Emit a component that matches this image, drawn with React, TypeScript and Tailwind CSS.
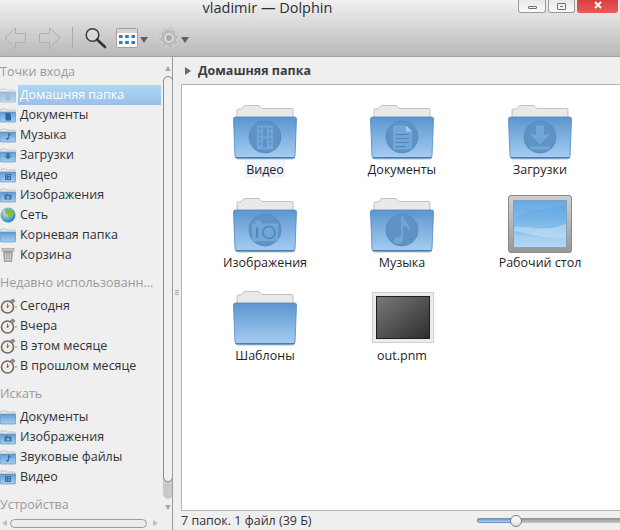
import React from 'react'

type Emblem = 'video' | 'doc' | 'down' | 'photo' | 'music' | 'home' | 'none'

const folderFront = 'M0.500 15 Q0.500 13 2.500 13 H61.500 Q63.500 13 63.500 15 L62 52 Q61.500 54 59.500 54 H4.500 Q2.500 54 2 52 Z'

function EmblemShape({ kind }: { kind: Emblem }) {
  const c = '#70a6d8'
  const d = '#4f85b9'
  if (kind === 'video') {
    return (
      <path d="M24 21 H40 V45 H24 Z M26 23 V26 H28 V23 Z M26 28 V31 H28 V28 Z M26 33 V36 H28 V33 Z M26 38 V41 H28 V38 Z M36 23 V26 H38 V23 Z M36 28 V31 H38 V28 Z M36 33 V36 H38 V33 Z M36 38 V41 H38 V38 Z M30 23 V32 H34 V23 Z M30 34 V43 H34 V34 Z" fill={c} fillRule="evenodd" />
    )
  }
  if (kind === 'doc') {
    return (
      <g>
        <path d="M23 21 H36 L42 27 V45 H23 Z" fill={c} />
        <path d="M36 21 V27 H42 Z" fill="#a6cdf0" />
        <path d="M26 30 H39 M26 34 H39 M26 38 H39 M26 42 H36" stroke={d} strokeWidth="1" />
      </g>
    )
  }
  if (kind === 'down') {
    return (
      <g fill={c}>
        <path d="M28 21 H36 V30 H42 L32 40 L22 30 H28 Z" />
        <path d="M22 42 H42 V45 H22 Z" />
      </g>
    )
  }
  if (kind === 'photo') {
    return (
      <g>
        <path d="M19 26 H22 V23 H28 V26 H45 V44 H19 Z" fill={c} />
        <rect x="23" y="30" width="2" height="10" fill={d} />
        <circle cx="36" cy="35" r="6" fill="none" stroke={d} strokeWidth="1.600" />
      </g>
    )
  }
  if (kind === 'music') {
    return (
      <path d="M31 19 H33 C34 25 41 26 40 34 C39 30 36 29 33 28 V41 C33 45 29 47 26 46 C23 45 23 42 26 40 C28 39 30 39 31 40 Z" fill={c} />
    )
  }
  return null
}

function Folder({ emblem = 'none' }: { emblem?: Emblem }) {
  const id = `f-${emblem}`
  return (
    <svg width="64" height="64" viewBox="0 0 64 64">
      <defs>
        <linearGradient id={id} x1="0" y1="0" x2="0" y2="1">
          <stop offset="0" stopColor="#5b96cf" />
          <stop offset="1" stopColor="#a6cdf1" />
        </linearGradient>
      </defs>
      <g transform="translate(0 8)">
        <path d="M4 14 V6 Q4 5 5 5 H8 L11 2 Q12 1.500 13 1.500 H25 Q26 1.500 27 2.500 L29 4.500 H59 Q60 4.500 60 6 V14 Z" fill="#e9e9e9" stroke="#b4b4b4" strokeWidth="0.8" />
        <path d={folderFront} fill={`url(#${id})`} stroke="#4e86bd" strokeWidth="0.8" />
        <path d="M2 53 H62 L61.500 54.500 H3 Z" fill="#4a7dae" />
        <ellipse cx="32" cy="55.500" rx="29" ry="1" fill="#000" opacity="0.12" />
        {emblem !== 'none' && (
          <>
            <circle cx="32" cy="33" r="16" fill="#5f93c6" stroke="#5488bb" strokeWidth="0.8" />
            <g transform="translate(0 0.500)">
              <EmblemShape kind={emblem} />
            </g>
          </>
        )}
      </g>
    </svg>
  )
}

function DesktopIcon() {
  return (
    <svg width="64" height="64" viewBox="0 0 64 64">
      <defs>
        <linearGradient id="dk" x1="0" y1="0" x2="0" y2="1">
          <stop offset="0" stopColor="#5aa2e0" />
          <stop offset="1" stopColor="#a5d2f4" />
        </linearGradient>
        <linearGradient id="dkf" x1="0" y1="0" x2="0" y2="1">
          <stop offset="0" stopColor="#d0d0d0" />
          <stop offset="1" stopColor="#989898" />
        </linearGradient>
      </defs>
      <rect x="0.500" y="6.500" width="63" height="57" rx="2.500" fill="url(#dkf)" stroke="#8a8a8a" />
      <rect x="5.500" y="11.500" width="53" height="47" fill="url(#dk)" stroke="#7595b2" strokeWidth="0.6" />
      <path d="M6 30 C20 18 40 22 58 16 V12 H6 Z" fill="#fff" opacity="0.08" />
      <path d="M6 38 C20 36 38 44 58 35 V48 C40 52 20 44 6 42 Z" fill="#fff" opacity="0.3" />
      <path d="M6 46 C22 44 40 54 58 47 V58 H6 Z" fill="#fff" opacity="0.14" />
    </svg>
  )
}

function PnmIcon() {
  return (
    <svg width="64" height="64" viewBox="0 0 64 64">
      <defs>
        <linearGradient id="pn" x1="0" y1="0" x2="1" y2="1">
          <stop offset="0" stopColor="#7a7a7a" />
          <stop offset="1" stopColor="#2d2d2d" />
        </linearGradient>
      </defs>
      <rect x="2.500" y="10.500" width="61" height="50" fill="#ececec" stroke="#cfcfcf" />
      <rect x="6.500" y="14.500" width="53" height="42" fill="url(#pn)" stroke="#1f1f1f" />
    </svg>
  )
}

function SmallFolder({ emblem = 'none' }: { emblem?: Emblem }) {
  const id = `s-${emblem}`
  const g = '#3a72a8'
  return (
    <svg width="16" height="16" viewBox="0 0 16 16" className="shrink-0">
      <defs>
        <linearGradient id={id} x1="0" y1="0" x2="0" y2="1">
          <stop offset="0" stopColor="#5f9ad2" />
          <stop offset="1" stopColor="#a9d0f2" />
        </linearGradient>
      </defs>
      <path d="M1 5.500 V2 H6 L7 3 H15 V5.500 Z" fill="#ececec" stroke="#a8a8a8" strokeWidth="0.6" />
      <rect x="0.300" y="5" width="15.400" height="10" rx="0.800" fill={`url(#${id})`} stroke="#4e86bd" strokeWidth="0.6" />
      {emblem === 'home' && <path d="M4 10 L8 6.500 L12 10 H10.500 V13 H5.500 V10 Z" fill="#6f9fcc" />}
      {emblem === 'doc' && <path d="M5.500 6 H9.500 L11 7.500 V13.500 H5.500 Z" fill="#2f669c" />}
      {emblem === 'music' && <path d="M8 6 H9 V11.500 C9 13 6 13.500 6 12 C6 11 7 10.500 8 10.800 Z M9 6 C10 7.500 11.500 7.500 11 9.500 C10.500 8.500 10 8.300 9 8 Z" fill={g} />}
      {emblem === 'down' && <path d="M6.500 6 H9.500 V9 H11.500 L8 12.500 L4.500 9 H6.500 Z" fill={g} />}
      {emblem === 'video' && <path d="M5 7 H11 V13 H5 Z M6 8 V9 H7 V8 Z M8 8 V9 H10 V8 Z M6 10.500 V11.500 H7 V10.500 Z M8 10.500 V11.500 H10 V10.500 Z" fill={g} fillRule="evenodd" />}
      {emblem === 'photo' && <path d="M4.500 7.500 H6.500 V6.800 H8 V7.500 H11.500 V12.500 H4.500 Z M8 8.800 A1.500 1.500 0 1 0 8 11.800 A1.500 1.500 0 1 0 8 8.800 Z" fill={g} fillRule="evenodd" />}
    </svg>
  )
}

function Globe() {
  return (
    <svg width="16" height="16" viewBox="0 0 16 16" className="shrink-0">
      <defs>
        <radialGradient id="gl" cx="0.4" cy="0.35" r="0.7">
          <stop offset="0" stopColor="#c9ecff" />
          <stop offset="1" stopColor="#1f78c8" />
        </radialGradient>
      </defs>
      <circle cx="8" cy="8" r="7.500" fill="url(#gl)" />
      <path d="M6 2 C9 1 13 3 13.500 6 C14 9 11 12 9 11 C8 9 9 8 7 7.500 C5 7 4.500 4 6 2 Z" fill="#86bf2f" />
      <path d="M2 9 C3 9 4.500 10.500 4.500 13 C3 12 2 11 2 9 Z" fill="#86bf2f" />
    </svg>
  )
}

function Trash() {
  return (
    <svg width="16" height="16" viewBox="0 0 16 16" className="shrink-0">
      <rect x="2" y="1.500" width="12" height="2.500" fill="#c8c8c8" stroke="#8c8c8c" strokeWidth="0.5" />
      <path d="M3 4 H13 L12 15 H4 Z" fill="#9f9f9f" />
      <path d="M5.500 6 L6 14 M8 6 V14 M10.500 6 L10 14" stroke="#e5e5e5" strokeWidth="0.9" />
    </svg>
  )
}

function Clock() {
  return (
    <svg width="17" height="16" viewBox="0 0 17 16" className="shrink-0 mr-[-1px]">
      <path d="M10 2.500 L13 0.500 L15.500 3 L13.500 5 Z" fill="#8a8a8a" />
      <circle cx="7.500" cy="9" r="6" fill="#f3eee6" stroke="#6e6a66" strokeWidth="1.600" />
      <path d="M7.500 5.500 V9 L9.500 7" stroke="#a63b3b" strokeWidth="0.8" fill="none" />
      <circle cx="7.500" cy="9" r="0.900" fill="#6a6a6a" />
      <path d="M15 9 H17" stroke="#8a8a8a" strokeWidth="1" />
    </svg>
  )
}

function SideHeading({ text, first }: { text: string; first?: boolean }) {
  return (
    <div className={`h-5 leading-5 text-[#9a9a9a] whitespace-nowrap ${first ? 'mt-[5px] mb-[3px]' : 'mt-[8px] mb-[3px]'}`}>
      {text}
    </div>
  )
}

function SideRow({ icon, text, active }: { icon: React.ReactNode; text: string; active?: boolean }) {
  return (
    <div className="h-5 flex items-center relative">
      <span className={active ? 'opacity-60 flex' : 'flex'}>{icon}</span>
      {active ? (
        <div className="absolute left-[18px] right-0 top-0 bottom-0 bg-gradient-to-b from-[#aed6f8] to-[#9cc0e6] text-white leading-5 pl-[2px]">
          {text}
        </div>
      ) : (
        <span className="ml-1 text-[#2f3336] whitespace-nowrap">{text}</span>
      )}
    </div>
  )
}

function Sidebar() {
  return (
    <div className="w-[181px] h-full flex shrink-0">
      <div className="w-[163px] flex flex-col shrink-0">
        <div className="flex-1 overflow-hidden pr-[2px]">
          <SideHeading text="Точки входа" first />
          <SideRow icon={<SmallFolder emblem="home" />} text="Домашняя папка" active />
          <SideRow icon={<SmallFolder emblem="doc" />} text="Документы" />
          <SideRow icon={<SmallFolder emblem="music" />} text="Музыка" />
          <SideRow icon={<SmallFolder emblem="down" />} text="Загрузки" />
          <SideRow icon={<SmallFolder emblem="video" />} text="Видео" />
          <SideRow icon={<SmallFolder emblem="photo" />} text="Изображения" />
          <SideRow icon={<Globe />} text="Сеть" />
          <SideRow icon={<SmallFolder />} text="Корневая папка" />
          <SideRow icon={<Trash />} text="Корзина" />
          <SideHeading text="Недавно использованн..." />
          <SideRow icon={<Clock />} text="Сегодня" />
          <SideRow icon={<Clock />} text="Вчера" />
          <SideRow icon={<Clock />} text="В этом месяце" />
          <SideRow icon={<Clock />} text="В прошлом месяце" />
          <SideHeading text="Искать" />
          <SideRow icon={<SmallFolder />} text="Документы" />
          <SideRow icon={<SmallFolder emblem="photo" />} text="Изображения" />
          <SideRow icon={<SmallFolder emblem="music" />} text="Звуковые файлы" />
          <SideRow icon={<SmallFolder emblem="video" />} text="Видео" />
          <SideHeading text="Устройства" />
        </div>
        {/* horizontal scrollbar */}
        <div className="h-[16px] flex items-center shrink-0 pt-[2px]">
          <span className="ml-[2px] w-0 h-0 border-y-[3px] border-y-transparent border-r-[5px] border-r-[#bdbdbd]" />
          <div className="ml-[3px] w-[137px] h-[9px] rounded-full bg-[#ececec] border border-[#9c9c9c]" />
          <span className="ml-[6px] w-0 h-0 border-y-[3px] border-y-transparent border-l-[5px] border-l-[#bdbdbd]" />
        </div>
      </div>
      {/* vertical scrollbar */}
      <div className="w-[10px] flex flex-col items-center shrink-0 pt-[9px]">
        <span className="w-0 h-0 border-x-[3px] border-x-transparent border-b-[5px] border-b-[#a8a8a8]" />
        <div className="mt-[5px] w-[10px] h-[423px] rounded-full bg-[#c9c9c9] flex flex-col">
          <div className="h-[406px] rounded-full bg-[#f0f0f0] border border-[#8e8e8e]" />
        </div>
        <span className="mt-[6px] w-0 h-0 border-x-[3px] border-x-transparent border-t-[5px] border-t-[#a8a8a8]" />
      </div>
      {/* splitter */}
      <div className="w-2 flex flex-col items-center justify-center gap-px pb-[2px] border-l border-[#9c9c9c] -ml-px">
        <span className="w-1 h-px bg-[#a8a8a8]" />
        <span className="w-1 h-px bg-[#a8a8a8]" />
        <span className="w-1 h-px bg-[#a8a8a8]" />
      </div>
    </div>
  )
}

function FileItem({ icon, label, hl }: { icon: React.ReactNode; label: string; hl?: boolean }) {
  return (
    <div className="flex flex-col items-center">
      {icon}
      <span className={`h-[18px] leading-[20px] px-[1px] text-[#1f2326] whitespace-nowrap ${hl ? 'bg-[#eef5fc]' : ''}`}>{label}</span>
    </div>
  )
}

function WindowButtons() {
  return (
    <div className="flex gap-[2px] items-start">
      <div className="w-[28px] h-[13px] rounded-b-[3px] border border-t-0 border-[#9a9a9a] bg-gradient-to-b from-[#e8e8e8] to-[#fbfbfb] flex items-center justify-center">
        <span className="w-[9px] h-[3px] mt-[3px] border border-[#6f6f6f] rounded-[1px]" />
      </div>
      <div className="w-[27px] h-[13px] rounded-b-[3px] border border-t-0 border-[#9a9a9a] bg-gradient-to-b from-[#e8e8e8] to-[#fbfbfb] flex items-center justify-center">
        <span className="w-[9px] h-[7px] border border-[#6f6f6f] rounded-[1px] flex items-center justify-center">
          <span className="w-[3px] h-px bg-[#6f6f6f]" />
        </span>
      </div>
      <div className="w-[41px] h-[13px] rounded-b-[3px] bg-gradient-to-b from-[#d93e42] to-[#ea5a5a] flex items-center justify-center">
        <svg width="8" height="8" viewBox="0 0 8 8" className="-mt-[3px]">
          <path d="M1 1 L7 7 M7 1 L1 7" stroke="#fff" strokeWidth="2" />
        </svg>
      </div>
    </div>
  )
}

function ArrowIcon({ flip }: { flip?: boolean }) {
  return (
    <svg width="23" height="22" viewBox="0 0 23 22" className={flip ? '-scale-x-100' : ''}>
      <defs>
        <linearGradient id="ar" x1="0" y1="0" x2="0" y2="1">
          <stop offset="0" stopColor="#d6d6d6" />
          <stop offset="1" stopColor="#c2c2c2" />
        </linearGradient>
      </defs>
      <path d="M1 11 L11.500 1 V6.500 H21.500 V15.500 H11.500 V21 Z" fill="url(#ar)" stroke="#aeaeae" strokeWidth="1" />
    </svg>
  )
}

function Caret() {
  return <span className="w-0 h-0 border-x-[4px] border-x-transparent border-t-[6px] border-t-[#606060] mt-[5px]" />
}

function Toolbar() {
  return (
    <div className="flex items-center h-[38px] pl-1 pt-[1px]">
      <ArrowIcon />
      <div className="ml-[11px]"><ArrowIcon flip /></div>
      <div className="ml-[11px] w-px h-[22px] bg-[#a9a9a9]" />
      <svg width="23" height="22" viewBox="0 0 23 22" className="ml-[11px]">
        <circle cx="8.500" cy="8" r="6.300" fill="#e2e4e6" fillOpacity="0.5" stroke="#3a3a3a" strokeWidth="1.500" />
        <path d="M13 12.500 L21 20" stroke="#333" strokeWidth="2.600" strokeLinecap="round" />
      </svg>
      <svg width="22" height="20" viewBox="0 0 22 20" className="ml-[9px]">
        <rect x="0.500" y="0.500" width="21" height="19" rx="1" fill="#fafafa" stroke="#a0a0a0" />
        <rect x="1" y="1" width="20" height="4" fill="#d4d4d4" />
        <path d="M3 7 H6.500 V10 H3 Z M9.200 7 H12.800 V10 H9.200 Z M15.500 7 H19 V10 H15.500 Z M3 13 H6.500 V16 H3 Z M9.200 13 H12.800 V16 H9.200 Z M15.500 13 H19 V16 H15.500 Z" fill="#2f78d0" />
      </svg>
      <span className="ml-[2px] flex"><Caret /></span>
      <svg width="22" height="22" viewBox="0 0 22 22" className="ml-[10px]">
        <circle cx="11" cy="11" r="7" fill="none" stroke="#bcbcbc" strokeWidth="4" />
        <circle cx="11" cy="11" r="9" fill="none" stroke="#c6c6c6" strokeWidth="3.500" strokeDasharray="3.500 3.570" />
        <circle cx="11" cy="11" r="8.500" fill="none" stroke="#e0e0e0" strokeWidth="0.700" strokeDasharray="3.500 3.170" />
        <circle cx="11" cy="11" r="3.800" fill="#a9a9a9" stroke="#ececec" />
      </svg>
      <span className="ml-[1px] flex"><Caret /></span>
    </div>
  )
}

export default function App() {
  return (
    <div className="w-[620px] h-[530px] overflow-hidden flex flex-col bg-[#efefef] text-[12.5px] font-['Open_Sans','Noto_Sans',sans-serif]">
      {/* Title bar and toolbar */}
      <header className="h-[57px] shrink-0 bg-gradient-to-b from-[#f1f1f1] to-[#b9b9b9] border-b border-[#a0a0a0]">
        <div className="h-[18px] flex">
          <div className="w-[518px] pl-[17px] text-center text-[14.5px] leading-[16px] text-[#2b2f33]">vladimir — Dolphin</div>
          <WindowButtons />
        </div>
        <Toolbar />
      </header>

      <div className="flex-1 flex min-h-0">
        <Sidebar />
        <div className="flex-1 flex flex-col min-w-0">
          {/* Breadcrumb */}
          <div className="h-[27px] shrink-0 flex items-center pl-1 pt-[1px]">
            <span className="w-0 h-0 border-y-[4px] border-y-transparent border-l-[6px] border-l-[#6a6a6a]" />
            <span className="ml-[7px] font-bold text-[#3a3d40]">Домашняя папка</span>
          </div>
          {/* Icon view */}
          <div className="flex-1 bg-white border-t border-l border-b border-[#b4b4b4] pl-[15px] pt-[11px]">
            <div className="grid grid-cols-[136px_138px_138px] auto-rows-[93px]">
              <FileItem icon={<Folder emblem="video" />} label="Видео" hl />
              <FileItem icon={<Folder emblem="doc" />} label="Документы" />
              <FileItem icon={<Folder emblem="down" />} label="Загрузки" />
              <FileItem icon={<Folder emblem="photo" />} label="Изображения" />
              <FileItem icon={<Folder emblem="music" />} label="Музыка" />
              <FileItem icon={<DesktopIcon />} label="Рабочий стол" />
              <FileItem icon={<Folder />} label="Шаблоны" />
              <FileItem icon={<PnmIcon />} label="out.pnm" />
            </div>
          </div>
          {/* Status bar */}
          <div className="h-[19px] shrink-0 flex items-center text-[#2f3336]">
            <span className="whitespace-nowrap pt-[2px]">7 папок. 1 файл (39 Б)</span>
            <div className="ml-auto w-[143px] h-[5px] relative rounded-l-full bg-gradient-to-b from-[#8c8c8c] to-[#c9c9c9]">
              <div className="absolute left-0 top-0 bottom-0 w-[38px] rounded-l-full bg-gradient-to-b from-[#5f9ad2] to-[#a9d0f2] border border-[#6f94b8]" />
              <div className="absolute left-[33px] -top-[3px] w-3 h-3 rounded-full bg-gradient-to-b from-white to-[#e2e2e2] border border-[#7d7d7d]" />
            </div>
          </div>
        </div>
      </div>
    </div>
  )
}
